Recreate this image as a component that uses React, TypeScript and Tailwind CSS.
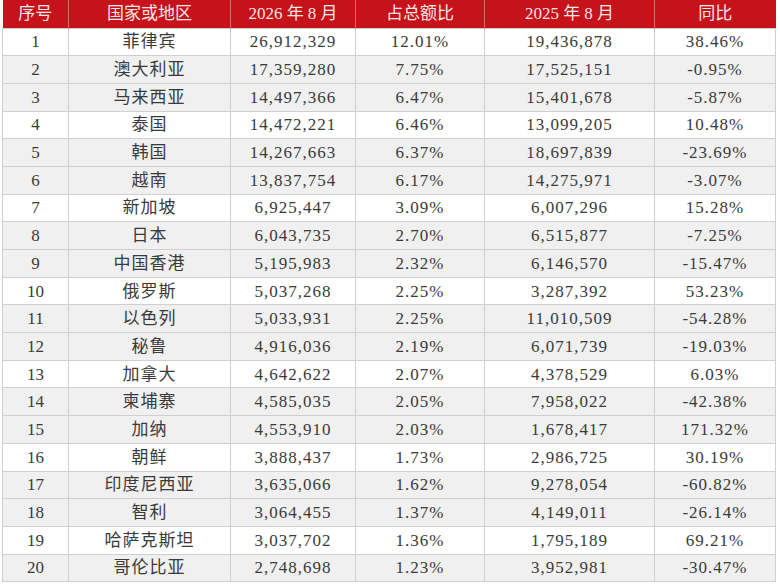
const rows: [string, string, string, string, string][] = [
  ["菲律宾", "26,912,329", "12.01%", "19,436,878", "38.46%"],
  ["澳大利亚", "17,359,280", "7.75%", "17,525,151", "-0.95%"],
  ["马来西亚", "14,497,366", "6.47%", "15,401,678", "-5.87%"],
  ["泰国", "14,472,221", "6.46%", "13,099,205", "10.48%"],
  ["韩国", "14,267,663", "6.37%", "18,697,839", "-23.69%"],
  ["越南", "13,837,754", "6.17%", "14,275,971", "-3.07%"],
  ["新加坡", "6,925,447", "3.09%", "6,007,296", "15.28%"],
  ["日本", "6,043,735", "2.70%", "6,515,877", "-7.25%"],
  ["中国香港", "5,195,983", "2.32%", "6,146,570", "-15.47%"],
  ["俄罗斯", "5,037,268", "2.25%", "3,287,392", "53.23%"],
  ["以色列", "5,033,931", "2.25%", "11,010,509", "-54.28%"],
  ["秘鲁", "4,916,036", "2.19%", "6,071,739", "-19.03%"],
  ["加拿大", "4,642,622", "2.07%", "4,378,529", "6.03%"],
  ["柬埔寨", "4,585,035", "2.05%", "7,958,022", "-42.38%"],
  ["加纳", "4,553,910", "2.03%", "1,678,417", "171.32%"],
  ["朝鲜", "3,888,437", "1.73%", "2,986,725", "30.19%"],
  ["印度尼西亚", "3,635,066", "1.62%", "9,278,054", "-60.82%"],
  ["智利", "3,064,455", "1.37%", "4,149,011", "-26.14%"],
  ["哈萨克斯坦", "3,037,702", "1.36%", "1,795,189", "69.21%"],
  ["哥伦比亚", "2,748,698", "1.23%", "3,952,981", "-30.47%"],
];

const headers = ["序号", "国家或地区", "2026 年 8 月", "占总额比", "2025 年 8 月", "同比"];
const widths = ["w-[66px]", "w-[162px]", "w-[125px]", "w-[129px]", "w-[170px]", "w-[121px]"];

export default function App() {
  return (
    <div className="w-[780px] h-[586px] bg-white overflow-hidden pl-[2px] font-['Liberation_Serif','Noto_Sans_CJK_SC',serif]">
      <table className="w-[773px] table-fixed border-collapse text-[17px] text-[#3a3a3a]">
        <colgroup>
          {widths.map((w, i) => (
            <col key={i} className={w} />
          ))}
        </colgroup>
        <thead>
          <tr className="h-[28px] bg-[#c5121b]">
            {headers.map((h, i) => (
              <th
                key={i}
                className="border-l border-[#e06a6a] first:border-l-0 text-center font-normal text-[#fbe6e6] p-0 leading-none"
              >
                {h}
              </th>
            ))}
          </tr>
        </thead>
        <tbody>
          {rows.map((r, i) => (
            <tr key={i} className={`h-[27.7px] ${i % 3 === 0 ? "bg-white" : "bg-[#f0f0f0]"}`}>
              <td className="border border-[#cfcfcf] text-center p-0 leading-none">{i + 1}</td>
              {r.map((c, j) => (
                <td
                  key={j}
                  className="border border-[#cfcfcf] text-center p-0 leading-none tracking-[1px]"
                >
                  {c}
                </td>
              ))}
            </tr>
          ))}
        </tbody>
      </table>
    </div>
  );
}
